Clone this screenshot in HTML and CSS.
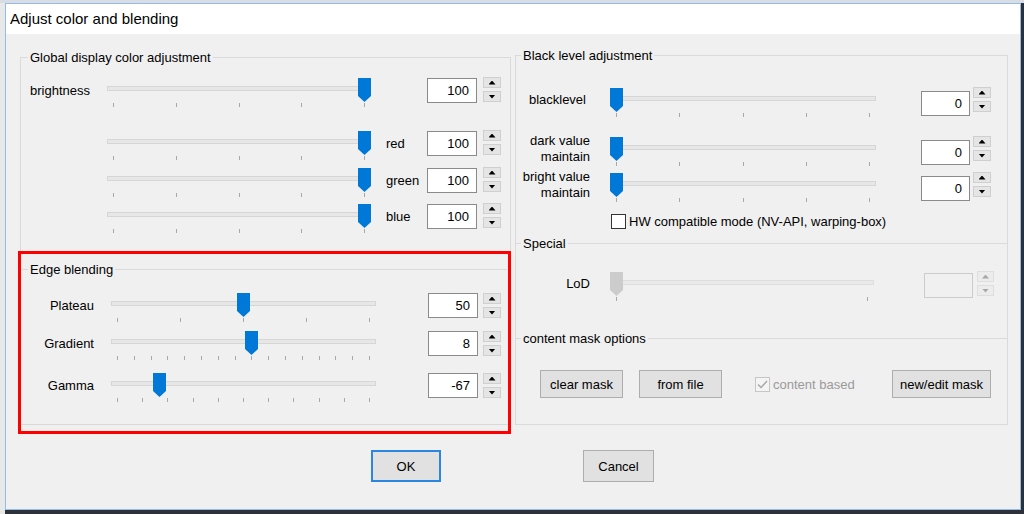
FILE: index.html
```html
<!DOCTYPE html>
<html>
<head>
<meta charset="utf-8">
<title>Adjust color and blending</title>
<link rel="stylesheet" href="styles.css">
</head>
<body>
<div class="window">
  <div class="titlebar">Adjust color and blending</div>
  <div class="main">
    <fieldset class="group gleft">
      <legend>Global display color adjustment</legend>

      <div class="row r-b">
        <div class="gl">brightness</div>
        <div class="slider gs">
          <div class="track"></div>
          <div class="ticks"><i></i><i></i><i></i><i></i><i></i></div>
          <svg class="thumb" style="left:calc((100% - 13px) * 1)" width="13" height="24" viewBox="0 0 13 24"><path d="M0 0H13V18L6.5 24L0 18Z"/></svg>
        </div>
        <div class="cl"></div>
        <div class="val">100</div>
        <div class="spin gsp"><span class="up"></span><span class="down"></span></div>
      </div>

      <div class="row r-r">
        <div class="gl"></div>
        <div class="slider gs">
          <div class="track"></div>
          <div class="ticks"><i></i><i></i><i></i><i></i><i></i></div>
          <svg class="thumb" style="left:calc((100% - 13px) * 1)" width="13" height="24" viewBox="0 0 13 24"><path d="M0 0H13V18L6.5 24L0 18Z"/></svg>
        </div>
        <div class="cl">red</div>
        <div class="val">100</div>
        <div class="spin gsp"><span class="up"></span><span class="down"></span></div>
      </div>

      <div class="row r-g">
        <div class="gl"></div>
        <div class="slider gs">
          <div class="track"></div>
          <div class="ticks"><i></i><i></i><i></i><i></i><i></i></div>
          <svg class="thumb" style="left:calc((100% - 13px) * 1)" width="13" height="24" viewBox="0 0 13 24"><path d="M0 0H13V18L6.5 24L0 18Z"/></svg>
        </div>
        <div class="cl">green</div>
        <div class="val">100</div>
        <div class="spin gsp"><span class="up"></span><span class="down"></span></div>
      </div>

      <div class="row r-bl">
        <div class="gl"></div>
        <div class="slider gs">
          <div class="track"></div>
          <div class="ticks"><i></i><i></i><i></i><i></i><i></i></div>
          <svg class="thumb" style="left:calc((100% - 13px) * 1)" width="13" height="24" viewBox="0 0 13 24"><path d="M0 0H13V18L6.5 24L0 18Z"/></svg>
        </div>
        <div class="cl">blue</div>
        <div class="val">100</div>
        <div class="spin gsp"><span class="up"></span><span class="down"></span></div>
      </div>

      <fieldset class="group gedge">
        <legend>Edge blending</legend>

        <div class="row e-p">
          <div class="el">Plateau</div>
          <div class="slider es">
            <div class="track"></div>
            <div class="ticks"><i></i><i></i><i></i><i></i><i></i></div>
            <svg class="thumb" style="left:calc((100% - 13px) * 0.5)" width="13" height="24" viewBox="0 0 13 24"><path d="M0 0H13V18L6.5 24L0 18Z"/></svg>
          </div>
          <div class="val ev">50</div>
          <div class="spin esp"><span class="up"></span><span class="down"></span></div>
        </div>

        <div class="row e-g">
          <div class="el">Gradient</div>
          <div class="slider es">
            <div class="track"></div>
            <div class="ticks"><i></i><i></i><i></i><i></i><i></i><i></i><i></i><i></i><i></i><i></i><i></i><i></i><i></i><i></i><i></i><i></i></div>
            <svg class="thumb" style="left:calc((100% - 13px) * 0.5333)" width="13" height="24" viewBox="0 0 13 24"><path d="M0 0H13V18L6.5 24L0 18Z"/></svg>
          </div>
          <div class="val ev">8</div>
          <div class="spin esp"><span class="up"></span><span class="down"></span></div>
        </div>

        <div class="row e-m">
          <div class="el">Gamma</div>
          <div class="slider es">
            <div class="track"></div>
            <div class="ticks"><i></i><i></i><i></i><i></i><i></i><i></i><i></i><i></i><i></i><i></i><i></i></div>
            <svg class="thumb" style="left:calc((100% - 13px) * 0.165)" width="13" height="24" viewBox="0 0 13 24"><path d="M0 0H13V18L6.5 24L0 18Z"/></svg>
          </div>
          <div class="val ev">-67</div>
          <div class="spin esp"><span class="up"></span><span class="down"></span></div>
        </div>
      </fieldset>
    </fieldset>

    <div class="rcol">
      <fieldset class="group rg1">
        <legend>Black level adjustment</legend>

        <div class="row rr-b">
          <div class="rl pad5">blacklevel</div>
          <div class="slider rs">
            <div class="track"></div>
            <div class="ticks"><i></i><i></i><i></i><i></i><i></i></div>
            <svg class="thumb" style="left:calc((100% - 13px) * 0)" width="13" height="24" viewBox="0 0 13 24"><path d="M0 0H13V18L6.5 24L0 18Z"/></svg>
          </div>
          <div class="val rv">0</div>
          <div class="spin rsp"><span class="up"></span><span class="down"></span></div>
        </div>

        <div class="row rr-d">
          <div class="rl">dark value<br>maintain</div>
          <div class="slider rs">
            <div class="track"></div>
            <div class="ticks"><i></i><i></i><i></i><i></i><i></i></div>
            <svg class="thumb" style="left:calc((100% - 13px) * 0)" width="13" height="24" viewBox="0 0 13 24"><path d="M0 0H13V18L6.5 24L0 18Z"/></svg>
          </div>
          <div class="val rv">0</div>
          <div class="spin rsp"><span class="up"></span><span class="down"></span></div>
        </div>

        <div class="row rr-br">
          <div class="rl">bright value<br>maintain</div>
          <div class="slider rs">
            <div class="track"></div>
            <div class="ticks"><i></i><i></i><i></i><i></i><i></i></div>
            <svg class="thumb" style="left:calc((100% - 13px) * 0)" width="13" height="24" viewBox="0 0 13 24"><path d="M0 0H13V18L6.5 24L0 18Z"/></svg>
          </div>
          <div class="val rv">0</div>
          <div class="spin rsp"><span class="up"></span><span class="down"></span></div>
        </div>

        <div class="cbrow">
          <span class="cb"></span>
          <span class="cbl">HW compatible mode (NV-API, warping-box)</span>
        </div>
      </fieldset>

      <fieldset class="group rg2">
        <legend>Special</legend>
        <div class="row rr-l">
          <div class="rl">LoD</div>
          <div class="slider rs ls disabled">
            <div class="track"></div>
            <div class="ticks"><i></i><i></i></div>
            <svg class="thumb" style="left:calc((100% - 13px) * 0)" width="13" height="24" viewBox="0 0 13 24"><path d="M0 0H13V18L6.5 24L0 18Z"/></svg>
          </div>
          <div class="val lv disabled"></div>
          <div class="spin lsp disabled"><span class="up"></span><span class="down"></span></div>
        </div>
      </fieldset>

      <fieldset class="group rg3">
        <legend>content mask options</legend>
        <div class="btnrow">
          <button class="btn b-clear">clear mask</button>
          <button class="btn b-file">from file</button>
          <span class="cbd"><svg width="15" height="15" viewBox="0 0 15 15"><rect x="0.5" y="0.5" width="14" height="14" fill="#f4f4f4" stroke="#c6c6c6"/><path d="M3 7.5L6 10.5L12 4" fill="none" stroke="#a6a6a6" stroke-width="1.4"/></svg></span>
          <span class="cbdl">content based</span>
          <button class="btn b-new">new/edit mask</button>
        </div>
      </fieldset>
    </div>
  </div>

  <div class="dlg">
    <button class="btn ok">OK</button>
    <button class="btn cancel">Cancel</button>
  </div>

  <div class="mark"></div>
</div>
</body>
</html>
```

FILE: styles.css
```css
* { box-sizing: border-box; }
html, body { margin: 0; padding: 0; }
body {
  width: 1024px;
  height: 514px;
  overflow: hidden;
  font-family: "Liberation Sans", Arial, sans-serif;
  font-size: 13px;
  color: #000;
  background:
    linear-gradient(#d9dde3, #d9dde3) 0 0 / 100% 3px no-repeat,
    linear-gradient(#e8e8e8, #e8e8e8) 0 0 / 5px 100% no-repeat,
    #2d323a;
}

.window {
  position: relative;
  margin: 3px 0 0 5px;
  width: 1016px;
  height: 507px;
  border: 1px solid #92bde9;
  background: #f0f0f0;
  display: flex;
  flex-direction: column;
}

.titlebar {
  flex: none;
  height: 30px;
  background: #fff;
  padding-left: 4px;
  font-size: 15px;
  line-height: 30px;
}

.main {
  display: flex;
  align-items: flex-start;
  padding-left: 14px;
}

.group {
  margin: 0;
  padding: 0;
  border: 1px solid #dadada;
  min-width: 0;
}
.group > legend {
  padding: 0 2px;
  font-size: 13px;
  line-height: 15px;
}

/* left group */
.gleft {
  width: 491px;
  height: 375px;
  margin-top: 16px;
}
.gleft > legend { margin-left: 7px; }

.row {
  display: flex;
  align-items: flex-start;
  height: 30px;
}
.r-b { margin-top: 13px; }
.r-r { margin-top: 23px; }
.r-g { margin-top: 7px; }
.r-bl { margin-top: 6px; }

.gl { width: 86px; padding-left: 9px; line-height: 26px; }
.gs { width: 264px; }
.cl { width: 56px; padding-left: 15px; line-height: 26px; }
.gsp { margin-left: 6px; margin-top: -1px; }

/* slider */
.slider {
  position: relative;
  height: 30px;
  flex: none;
}
.track {
  margin-top: 8px;
  height: 5px;
  border: 1px solid #d6d6d6;
  background: #e7e7e7;
}
.ticks {
  margin-top: 12px;
  padding: 0 6px;
  display: flex;
  justify-content: space-between;
}
.ticks i {
  display: block;
  width: 1px;
  height: 4px;
  background: #a8a8a8;
}
.thumb {
  position: absolute;
  top: 0;
  fill: #0078d7;
}
.slider.disabled .thumb { fill: #cccccc; }
.slider.disabled .track { border-color: #dedede; background: #e9e9e9; }

/* value box */
.val {
  flex: none;
  width: 50px;
  height: 25px;
  border: 1px solid #8a8a8a;
  background: #fff;
  text-align: right;
  padding-right: 7px;
  line-height: 23px;
}
.val.disabled {
  border-color: #cccccc;
  background: #f0f0f0;
}

/* spin buttons */
.spin {
  flex: none;
  width: 18px;
  display: flex;
  flex-direction: column;
  gap: 3px;
}
.spin span {
  height: 11px;
  border: 1px solid #cfcfcf;
  background: #e5e5e5;
  display: flex;
  align-items: center;
  justify-content: center;
}
.spin span::after {
  content: "";
  width: 7px;
  height: 4px;
  background: #000;
}
.spin .up::after { clip-path: polygon(50% 0, 100% 100%, 0 100%); }
.spin .down::after { clip-path: polygon(0 0, 100% 0, 50% 100%); }
.spin.disabled span { border-color: #dedede; background: #ececec; }
.spin.disabled span::after { background: #a8a8a8; }

/* edge blending */
.gedge {
  margin: 28px 3px 0 1px;
  border: 0;
  border-top: 1px solid #dadada;
}
.gedge > legend { margin-left: 6px; }
.e-p { margin-top: 16px; }
.e-g { margin-top: 8px; }
.e-m { margin-top: 12px; }
.el { width: 72px; text-align: right; line-height: 26px; }
.es { margin-left: 17px; width: 265px; }
.ev { margin-left: 52px; }
.esp { margin-left: 5px; }

/* right column */
.rcol {
  width: 493px;
  margin: 14px 0 0 4px;
  display: flex;
  flex-direction: column;
}
.rcol .group > legend { margin-left: 5px; }
.rg1 { height: 195px; border-bottom: 0; }
.rg2 { height: 102px; margin-top: -7px; border-bottom: 0; }
.rg3 { height: 94px; margin-top: -7px; }

.rl {
  width: 74px;
  height: 24px;
  display: flex;
  align-items: center;
  justify-content: flex-end;
  text-align: right;
  line-height: 16px;
}
.rl.pad5 { padding-right: 4px; }
.rs { margin-left: 20px; width: 266px; }
.rv { margin-left: 45px; width: 49px; margin-top: 3px; }
.rsp { margin-left: 3px; margin-top: -1px; }
.rr-b { margin-top: 25px; }
.rr-d { margin-top: 19px; }
.rr-br { margin-top: 6px; }

.cbrow {
  margin-top: 11px;
  padding-left: 95px;
  display: flex;
  align-items: center;
  height: 15px;
}
.cb {
  width: 15px;
  height: 15px;
  border: 1px solid #333;
  background: #fff;
  flex: none;
}
.cbl { margin-left: 3px; line-height: 15px; }

.rr-l { margin-top: 21px; }
.ls { width: 264px; }
.lv { margin-left: 50px; width: 49px; margin-top: 1px; }
.lsp { margin-left: 4px; width: 17px; margin-top: -1px; }

.btnrow {
  margin-top: 24px;
  display: flex;
  align-items: center;
  height: 28px;
}

.btn {
  font-family: inherit;
  font-size: 13px;
  color: #000;
  background: #e1e1e1;
  border: 1px solid #adadad;
  padding: 0;
  margin: 0;
  height: 28px;
}
.b-clear { margin-left: 24px; width: 83px; }
.b-file { margin-left: 16px; width: 83px; }
.cbd { margin-left: 33px; width: 15px; height: 15px; display: block; }
.cbd svg { display: block; }
.cbdl { margin-left: 3px; color: #9a9a9a; }
.b-new { margin-left: auto; margin-right: 16px; width: 99px; }

/* dialog buttons */
.dlg {
  display: flex;
  margin-top: 25px;
  padding-left: 365px;
}
.dlg .btn { height: 32px; }
.ok { width: 70px; border: 2px solid #2a86e0; }
.cancel { width: 71px; margin-left: 142px; }

/* annotation */
.mark {
  position: absolute;
  left: 12px;
  top: 247px;
  width: 493px;
  height: 183px;
  border: 3px solid #ff0000;
}
```
